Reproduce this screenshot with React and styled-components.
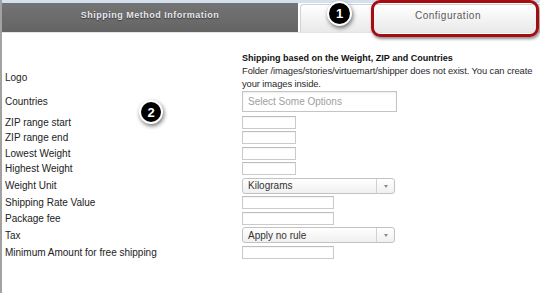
import React from "react";
import styled, { createGlobalStyle } from "styled-components";

const GlobalStyle = createGlobalStyle`
  html, body { margin: 0; padding: 0; background: #fff; }
  body { font-family: "Liberation Sans", Arial, sans-serif; overflow: hidden; }
`;

const Page = styled.div`
  position: relative;
  width: 540px;
  height: 293px;
  box-sizing: border-box;
  border-left: 2px solid #a2a2a2;
  overflow: hidden;
`;

const TopStrip = styled.div`
  height: 3px;
  background: #d4e0ee;
  margin-left: -2px;
`;

const TabBar = styled.div`
  display: flex;
  gap: 2px;
  height: 29px;
  border-bottom: 1px solid #e4e4e4;
`;

const Tab = styled.div`
  flex: 0 0 296px;
  display: flex;
  align-items: center;
  justify-content: center;
  box-sizing: border-box;
  font-size: ${(p) => (p.$active ? "10px" : "9px")};
  letter-spacing: 0.5px;
  padding-bottom: ${(p) => (p.$active ? "7px" : "5px")};
  ${(p) =>
    p.$active
      ? `
    margin-top: 1px;
    background: linear-gradient(#ffffff, #e9e9e9);
    border: 1px solid #d2d2d2;
    border-bottom: none;
    border-radius: 4px 0 0 0;
    color: #5a5a5a;
  `
      : `
    background: linear-gradient(#747474, #646464);
    color: #e6e8ee;
    font-weight: bold;
    text-shadow: 0 1px 1px rgba(0,0,0,0.5);
  `}
`;

const Highlight = styled.div`
  position: absolute;
  left: 369px;
  top: 0px;
  width: 168px;
  height: 37px;
  box-sizing: border-box;
  border: 3.5px solid #a40d12;
  border-radius: 9px;
  box-shadow: 1px 2px 3px rgba(0, 0, 0, 0.45);
`;

const Badge = styled.div`
  position: absolute;
  left: ${(p) => p.$x}px;
  top: ${(p) => p.$y}px;
  width: ${(p) => p.$size}px;
  height: ${(p) => p.$size}px;
  box-sizing: border-box;
  border-radius: 50%;
  background: #000;
  border: 2px solid #fff;
  box-shadow: 1px 2px 4px rgba(0, 0, 0, 0.55);
  color: #fff;
  font-weight: bold;
  font-size: 13px;
  display: flex;
  align-items: center;
  justify-content: center;
`;

const Form = styled.div`
  display: flex;
  flex-direction: column;
  gap: 2.5px;
  padding: 19px 0 0 3px;
`;

const Row = styled.div`
  display: grid;
  grid-template-columns: 237px auto;
  align-items: center;
  margin-top: ${(p) => p.$mt || 0}px;
`;

const Label = styled.div`
  font-size: 10px;
  line-height: 13px;
  color: #222;
`;

const Heading = styled.div`
  font-size: 9px;
  font-weight: bold;
  line-height: 12px;
  color: #111;
`;

const Note = styled.div`
  font-size: 9.4px;
  letter-spacing: -0.1px;
  line-height: 13px;
  color: #2a2a2a;
  white-space: nowrap;
`;

const Input = styled.div`
  box-sizing: border-box;
  width: ${(p) => p.$w}px;
  height: 13px;
  border: 1px solid #cacaca;
  border-top-color: #bdbdbd;
  background: #fff;
  box-shadow: inset 0 1px 1px rgba(0, 0, 0, 0.04);
`;

const MultiSelect = styled.div`
  box-sizing: border-box;
  width: 155px;
  height: 21px;
  border: 1px solid #c4c4c4;
  box-shadow: inset 0 1px 2px rgba(0, 0, 0, 0.08);
  background: #fff;
  font-size: 10px;
  color: #a0a0a0;
  display: flex;
  align-items: center;
  padding-left: 5px;
`;

const Select = styled.div`
  box-sizing: border-box;
  width: 153px;
  height: 16px;
  border: 1px solid #c2c2c2;
  border-radius: 3px;
  background: linear-gradient(#ffffff, #f0f0f0);
  display: flex;
  align-items: center;
  font-size: 10px;
  color: #333;
`;

const SelectText = styled.span`
  flex: 1;
  padding-left: 5px;
`;

const Arrow = styled.span`
  width: 17px;
  height: 100%;
  border-left: 1px solid #d2d2d2;
  display: flex;
  align-items: center;
  justify-content: center;
`;

const Tri = styled.span`
  width: 0;
  height: 0;
  border-left: 2.5px solid transparent;
  border-right: 2.5px solid transparent;
  border-top: 3px solid #8a8a8a;
  margin-top: 1px;
`;

function Dropdown({ value }) {
  return (
    <Select>
      <SelectText>{value}</SelectText>
      <Arrow>
        <Tri />
      </Arrow>
    </Select>
  );
}

export default function App() {
  return (
    <>
      <GlobalStyle />
      <Page>
        <TopStrip />
        <TabBar>
          <Tab>Shipping Method Information</Tab>
          <Tab $active>Configuration</Tab>
        </TabBar>
        <Form>
          <Row>
            <Label />
            <Heading>Shipping based on the Weight, ZIP and Countries</Heading>
          </Row>
          <Row $mt={-2.5}>
            <Label>Logo</Label>
            <Note>
              Folder /images/stories/virtuemart/shipper does not exist. You can create
              <br />
              your images inside.
            </Note>
          </Row>
          <Row $mt={-2}>
            <Label>Countries</Label>
            <MultiSelect>Select Some Options</MultiSelect>
          </Row>
          <Row $mt={1.5}>
            <Label>ZIP range start</Label>
            <Input $w={54} />
          </Row>
          <Row>
            <Label>ZIP range end</Label>
            <Input $w={54} />
          </Row>
          <Row>
            <Label>Lowest Weight</Label>
            <Input $w={54} />
          </Row>
          <Row>
            <Label>Highest Weight</Label>
            <Input $w={54} />
          </Row>
          <Row>
            <Label>Weight Unit</Label>
            <Dropdown value="Kilograms" />
          </Row>
          <Row>
            <Label>Shipping Rate Value</Label>
            <Input $w={92} />
          </Row>
          <Row>
            <Label>Package fee</Label>
            <Input $w={92} />
          </Row>
          <Row>
            <Label>Tax</Label>
            <Dropdown value="Apply no rule" />
          </Row>
          <Row>
            <Label>Minimum Amount for free shipping</Label>
            <Input $w={92} />
          </Row>
        </Form>
        <Highlight />
        <Badge $x={325} $y={1} $size={25}>1</Badge>
        <Badge $x={137} $y={100} $size={24}>2</Badge>
      </Page>
    </>
  );
}
